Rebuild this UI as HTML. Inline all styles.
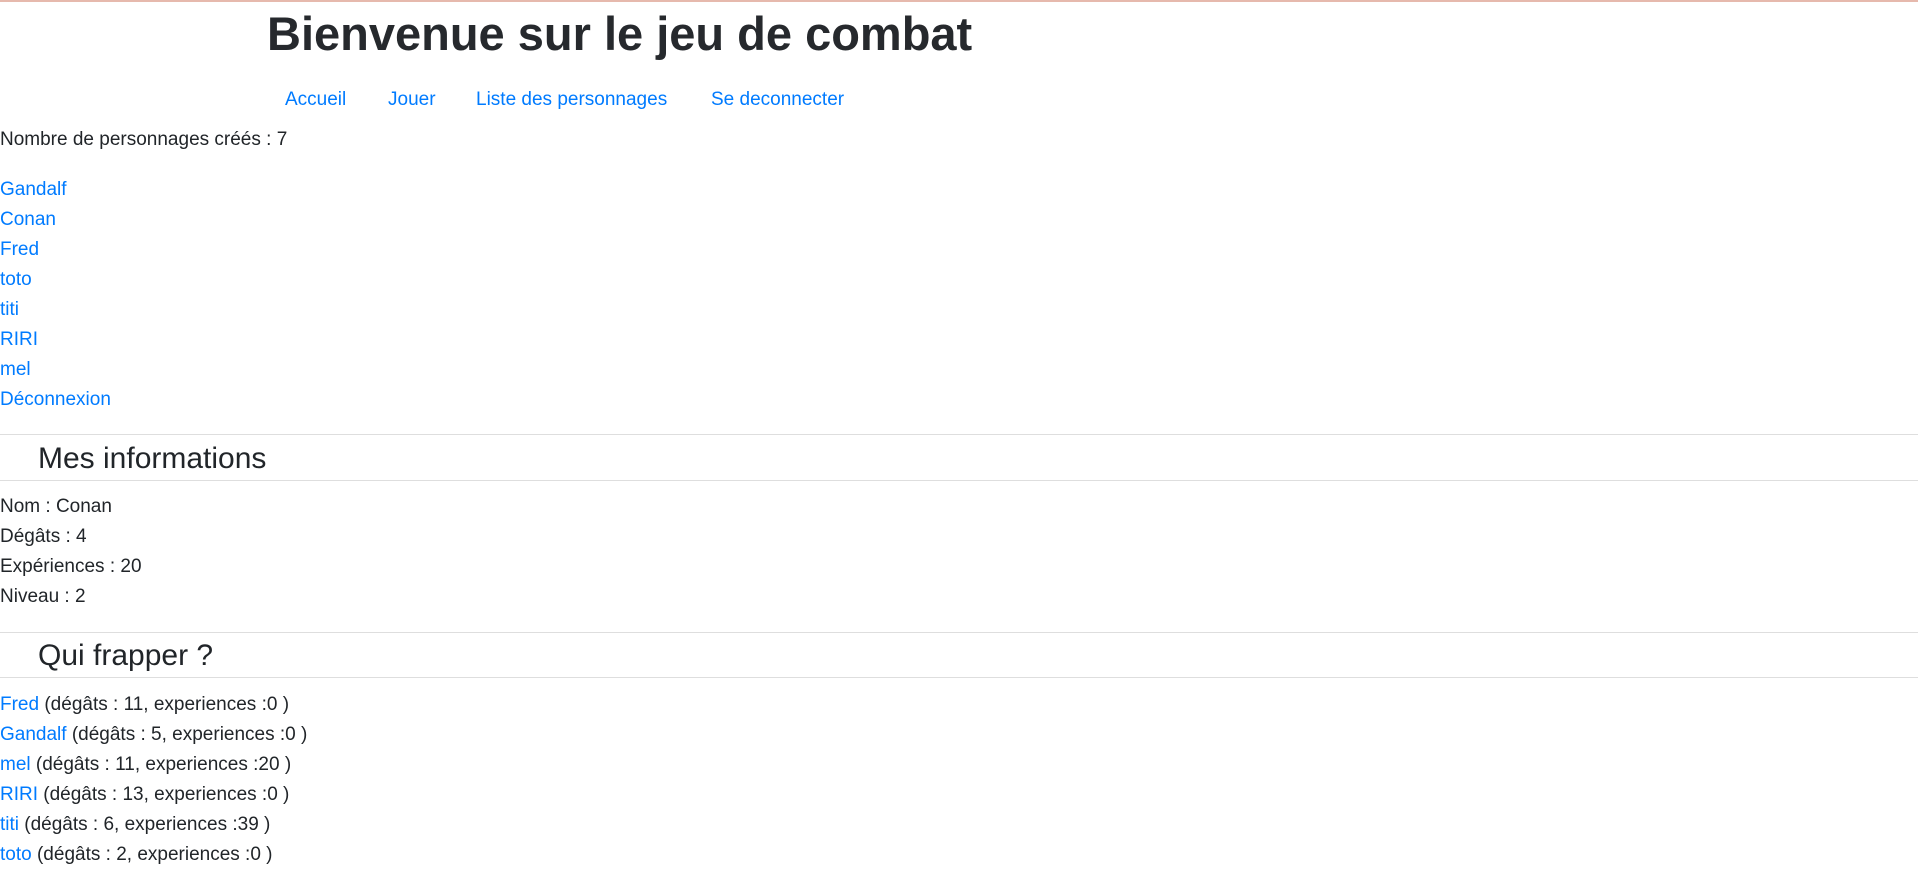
<!DOCTYPE html>
<html><head><meta charset="utf-8"><style>
body{margin:0;width:1918px;height:881px;overflow:hidden;background:#fff;font-family:"Liberation Sans",sans-serif;color:#212529;font-size:19px;position:relative;border-top:2px solid #e6b9ad;box-sizing:border-box}
.a{position:absolute;white-space:nowrap;line-height:30px}
a{color:#007bff;text-decoration:none}
h1{position:absolute;left:267px;top:2px;margin:0;font-size:47px;font-weight:bold;line-height:60px;white-space:nowrap;color:#26292d}
.hr{position:absolute;left:0;width:1918px;height:1px;background:#dedede}
.h{position:absolute;left:38px;font-size:30px;line-height:44px;white-space:nowrap}
</style></head><body>
<h1>Bienvenue sur le jeu de combat</h1>
<div class="a" style="left:285px;top:83px"><a>Accueil</a></div>
<div class="a" style="left:388px;top:83px"><a>Jouer</a></div>
<div class="a" style="left:476px;top:83px"><a>Liste des personnages</a></div>
<div class="a" style="left:711px;top:83px"><a>Se deconnecter</a></div>
<div class="a" style="left:0;top:123px">Nombre de personnages créés : 7</div>
<div class="a" style="left:0;top:173px"><a>Gandalf</a><br><a>Conan</a><br><a>Fred</a><br><a>toto</a><br><a>titi</a><br><a>RIRI</a><br><a>mel</a><br><a>Déconnexion</a></div>
<div class="hr" style="top:432px"></div>
<div class="h" style="top:435px">Mes informations</div>
<div class="hr" style="top:478px"></div>
<div class="a" style="left:0;top:490px">Nom : Conan<br>Dégâts : 4<br>Expériences : 20<br>Niveau : 2</div>
<div class="hr" style="top:630px"></div>
<div class="h" style="top:632px">Qui frapper ?</div>
<div class="hr" style="top:675px"></div>
<div class="a" style="left:0;top:688px"><a>Fred</a> (dégâts : 11, experiences :0 )<br><a>Gandalf</a> (dégâts : 5, experiences :0 )<br><a>mel</a> (dégâts : 11, experiences :20 )<br><a>RIRI</a> (dégâts : 13, experiences :0 )<br><a>titi</a> (dégâts : 6, experiences :39 )<br><a>toto</a> (dégâts : 2, experiences :0 )</div>
</body></html>
